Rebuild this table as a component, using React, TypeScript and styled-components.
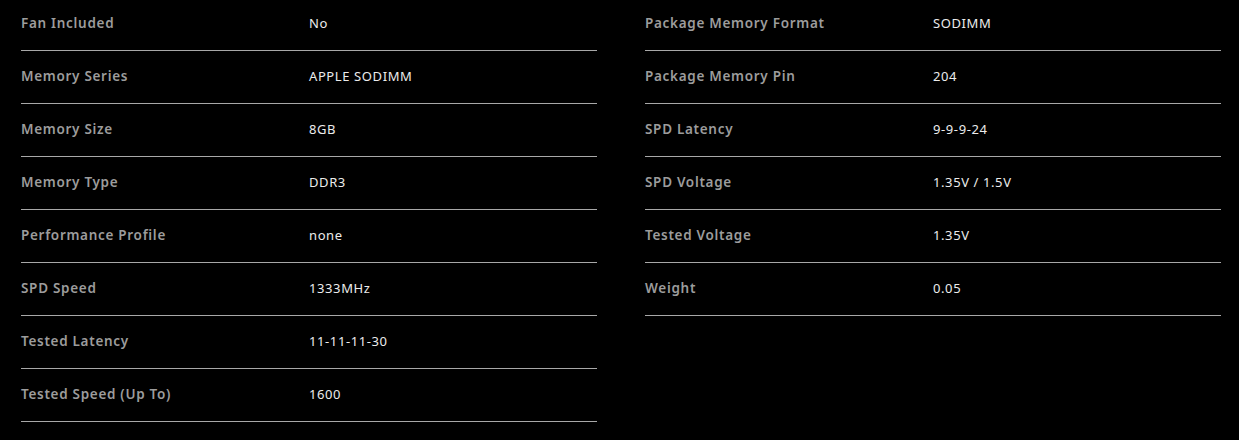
import React from "react";
import styled, { createGlobalStyle } from "styled-components";

const GlobalStyle = createGlobalStyle`
  html, body {
    margin: 0;
    padding: 0;
    background: #000;
  }
  body {
    font-family: "Noto Sans", "DejaVu Sans", sans-serif;
  }
`;

const Page = styled.div`
  display: grid;
  grid-template-columns: 1fr 1fr;
  column-gap: 48px;
  align-items: start;
  padding: 0 18px 0 21px;
  margin-top: -2px;
  background: #000;
  min-height: 442px;
  box-sizing: border-box;
`;

const Column = styled.div`
  display: flex;
  flex-direction: column;
`;

const Row = styled.div`
  display: grid;
  grid-template-columns: 1fr 1fr;
  padding: 17px 0 19px;
  border-bottom: 1px solid #a8a8a8;
  line-height: 16px;
`;

const Label = styled.span`
  color: #9c9c9c;
  font-size: 13.5px;
  font-weight: 600;
  letter-spacing: 0.7px;
`;

const Value = styled.span`
  color: #ececec;
  font-size: 13px;
  font-weight: 400;
  letter-spacing: 0.6px;
`;

const left: [string, string][] = [
  ["Fan Included", "No"],
  ["Memory Series", "APPLE SODIMM"],
  ["Memory Size", "8GB"],
  ["Memory Type", "DDR3"],
  ["Performance Profile", "none"],
  ["SPD Speed", "1333MHz"],
  ["Tested Latency", "11-11-11-30"],
  ["Tested Speed (Up To)", "1600"],
];

const right: [string, string][] = [
  ["Package Memory Format", "SODIMM"],
  ["Package Memory Pin", "204"],
  ["SPD Latency", "9-9-9-24"],
  ["SPD Voltage", "1.35V / 1.5V"],
  ["Tested Voltage", "1.35V"],
  ["Weight", "0.05"],
];

const Spec = ({ items }: { items: [string, string][] }) => (
  <Column>
    {items.map(([k, v]) => (
      <Row key={k}>
        <Label>{k}</Label>
        <Value>{v}</Value>
      </Row>
    ))}
  </Column>
);

export default function App() {
  return (
    <>
      <GlobalStyle />
      <Page>
        <Spec items={left} />
        <Spec items={right} />
      </Page>
    </>
  );
}
